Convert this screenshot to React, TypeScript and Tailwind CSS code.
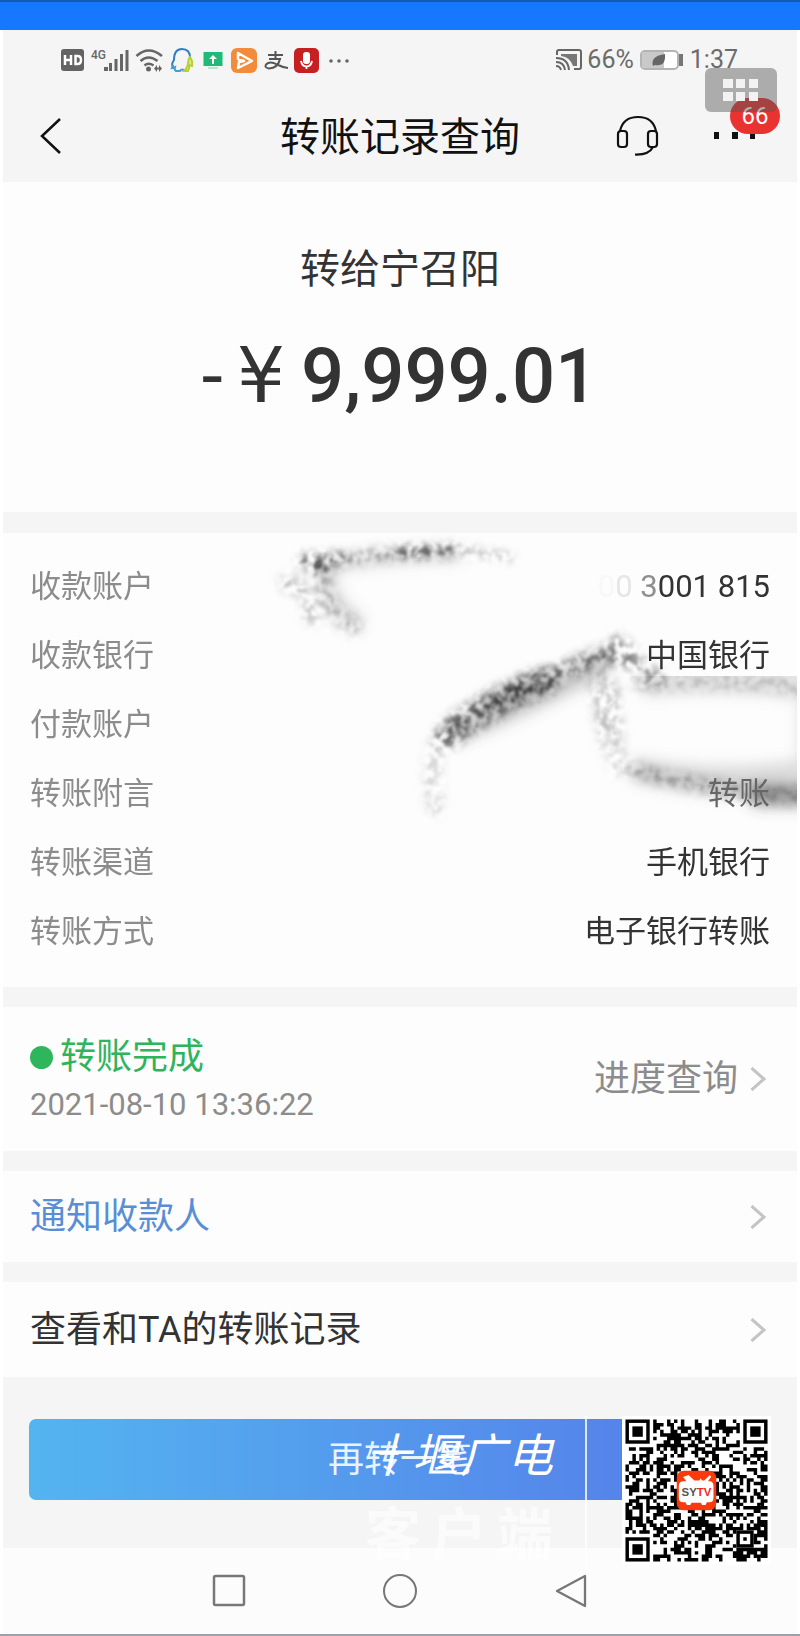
import type { ReactNode } from "react";

type Detail = { label: string; value: ReactNode };

const details: Detail[] = [
  {
    label: "收款账户",
    value: (
      <>
        <span className="text-[#f8f8f8]">0</span>
        <span className="text-[#e6e6e6]">0 </span>
        <span className="text-[#8f8f8f]">3</span>001 815
      </>
    ),
  },
  { label: "收款银行", value: "中国银行" },
  { label: "付款账户", value: "" },
  { label: "转账附言", value: <span className="text-[#666]">转账</span> },
  { label: "转账渠道", value: "手机银行" },
  { label: "转账方式", value: "电子银行转账" },
];

const QR_SIZE = 41;

function inFinder(x: number, y: number) {
  const far = QR_SIZE - 8;
  return (x < 8 && y < 8) || (x >= far && y < 8) || (x < 8 && y >= far);
}

function qrPath() {
  let d = "";
  let seed = 9157;
  for (let y = 0; y < QR_SIZE; y++) {
    for (let x = 0; x < QR_SIZE; x++) {
      seed = (seed * 1103515245 + 12345) % 2147483648;
      if (inFinder(x, y)) continue;
      if (x > 31 && x < 37 && y > 31 && y < 37) continue;
      if ((seed >> 12) % 100 < 52) d += `M${x} ${y}h1v1h-1z`;
    }
  }
  return d;
}

function Finder({ x, y }: { x: number; y: number }) {
  return (
    <>
      <rect x={x + 0.5} y={y + 0.5} width="6" height="6" fill="none" stroke="#000" />
      <rect x={x + 2} y={y + 2} width="3" height="3" />
    </>
  );
}

function QrCode() {
  return (
    <svg viewBox="-1 -1 43 43" className="block size-[149px] bg-white" role="img" aria-label="SYTV">
      <path d={qrPath()} />
      <Finder x={0} y={0} />
      <Finder x={34} y={0} />
      <Finder x={0} y={34} />
      <rect x="32.5" y="32.5" width="4" height="4" fill="none" stroke="#000" />
      <rect x="34" y="34" width="1" height="1" />
      <rect x="14.8" y="14.8" width="11.4" height="11.4" rx="2" fill="#f93a0c" />
      <path
        d="M18.2 16l1.7 1.6h1.4l.4-.6.4.6h.6L24.4 16l.3.6-.9 1.2h.4q1.2 0 1.2 1.4v3.3q0 1.4-1.2 1.4h-.7l-.4.8h-1l-.4-.7h-2.6l-.4.7h-1l-.4-.8h-.6q-1.3 0-1.3-1.4v-3.3q0-1.4 1.3-1.4h.9l-1-1.2z"
        fill="#fff"
      />
      <text x="20.5" y="22" textAnchor="middle" fontSize="3.3" fontWeight="700" className="font-['Liberation_Sans',sans-serif]">
        <tspan fill="#555">SY</tspan>
        <tspan fill="#f0281e">TV</tspan>
      </text>
    </svg>
  );
}

function StatusBar() {
  return (
    <div className="flex h-[60px] items-center justify-between pr-[59px] pl-[58px] text-[25px] text-[#6b6b6b]">
      <svg viewBox="61 45 290 28" className="h-7 w-[290px]" aria-hidden="true">
        <rect x="61" y="48" width="23" height="22" rx="3" fill="#636363" />
        <g stroke="#fff" strokeWidth="2.5" fill="none">
          <path d="M65 54v10M71 54v10M65 59h6M75.5 55v8h2q3.5 0 3.5-4t-3.5-4z" />
        </g>
        <text x="91" y="58" fontSize="12" fontWeight="500" fill="#666" className="font-[Roboto,sans-serif]">4G</text>
        <g fill="#666">
          <path d="M104 66h4v4h-4zM109 62h3v8h-3zM114.5 58h3v12h-3zM120 53h3v17h-3zM125.5 49h3v21h-3z" />
          <circle cx="148.5" cy="68" r="2.5" />
          <path d="M157 64l-3 3.5 3 3.5v-2.5h2V71l3-3.5-3-3.5v2.5h-2z" />
          <circle cx="331" cy="60" r="1.8" />
          <circle cx="339" cy="60" r="1.8" />
          <circle cx="347" cy="60" r="1.8" />
        </g>
        <g fill="none" stroke="#666" strokeWidth="2.5">
          <path d="M136.5 55q12-11 25.5 0M140.5 60q8-7 17 0M144.5 64.5q4-3.5 9 0" />
        </g>
        <g fill="none" strokeWidth="2">
          <path d="M173 66q-2-3 1-7 0-11 8-11 8 0 8 9" stroke="#2f7fc4" />
          <path d="M173 64l-1 3 3-1q-1 3 1 4h4q2-3 5 0" stroke="#4c9bd4" />
          <path d="M190 56q3 4 2 9l-3-1q1 3-1 6h-4q4-4 4-8t2-6z" stroke="#b8cf36" fill="#d7e67c" />
        </g>
        <path d="M203.5 51h19v14h-19z" fill="#1fb978" />
        <path d="M213 54l-4 4h3v5h2v-5h3z" fill="#fff" />
        <path d="M208 67h10" stroke="#a8dec8" strokeWidth="1.5" />
        <rect x="231" y="47" width="26" height="25" rx="6" fill="#f28c3c" />
        <path d="M238 52l14 8-14 7 1-6 5-1-6-2z" fill="none" stroke="#fff" strokeWidth="2.5" strokeLinejoin="round" />
        <g fill="none" stroke="#555" strokeWidth="2">
          <path d="M268 54h15M275.5 50v8M269 58h11q-2 9-11 9.5-5-1-3-4 4-4 11 0 6 3 11 3.5" />
        </g>
        <rect x="294" y="47" width="25" height="25" rx="5" fill="#c62023" />
        <rect x="303" y="51" width="7" height="12" rx="3" fill="#fff" />
        <path d="M301 60q1 5.5 5.5 5.5t5.5-5.5M306.5 65v3" fill="none" stroke="#fff" strokeWidth="1.8" />
      </svg>
      <div className="flex items-center">
        <svg viewBox="0 0 28 24" className="mr-1 h-6 w-7" aria-hidden="true" fill="none" stroke="#666" strokeWidth="2">
          <path d="M2 7V4q0-2 2-2h20q2 0 2 2v15q0 2-2 2h-5" />
          <path d="M6 6h16v12h-4Q15 9 6 8z" fill="#777" stroke="none" />
          <path d="M1 10q12 0 13 12M1 14q8 0 9 8M1 18q4 0 5 4" />
        </svg>
        <span>66%</span>
        <svg viewBox="0 0 44 22" className="mx-[6px] h-[22px] w-11" aria-hidden="true">
          <rect x="1" y="2" width="37" height="18" rx="4" fill="#fff" stroke="#b4b4b4" strokeWidth="2" />
          <path d="M2 3h22v16H2z" fill="#c9c9c9" />
          <path d="M39 5h4v12h-4z" fill="#777" />
          <path d="M13 17Q10 7 25 5q1 13-10 11z" fill="#666" />
        </svg>
        <span>1:37</span>
      </div>
    </div>
  );
}

function FloatingTools() {
  return (
    <div className="absolute top-[68px] right-5 h-[66px] w-[75px]">
      <div className="absolute top-[30px] right-0 flex h-9 w-[50px] items-center justify-center rounded-full bg-[#e93330] text-2xl text-white">
        66
      </div>
      <button
        type="button"
        aria-label="工具"
        className="absolute top-0 left-0 flex h-11 w-[72px] items-center justify-center rounded-[6px] bg-[#555]/45"
      >
        <svg viewBox="0 0 36 22" className="h-[22px] w-9" fill="#f2f2f2" aria-hidden="true">
          <path d="M0 0h10v9H0zM13 0h9v9h-9zM26 0h9v9h-9zM0 13h10v9H0zM13 13h9v9h-9zM26 13h9v9h-9z" />
        </svg>
      </button>
    </div>
  );
}

function Smudges() {
  return (
    <svg
      viewBox="250 532 547 318"
      className="pointer-events-none absolute top-0 right-0 h-[318px] w-[547px]"
      fill="none"
      strokeLinecap="round"
      strokeLinejoin="round"
      aria-hidden="true"
    >
      <defs>
        <filter id="speckle" filterUnits="userSpaceOnUse" x="200" y="500" width="640" height="400">
          <feGaussianBlur in="SourceGraphic" stdDeviation="5" result="soft" />
          <feTurbulence type="fractalNoise" baseFrequency="0.13" numOctaves="2" seed="4" />
          <feColorMatrix values="0 0 0 0 0  0 0 0 0 0  0 0 0 0 0  3.5 0 0 0 -1.3" result="noise" />
          <feComposite in="soft" in2="noise" operator="in" result="grains" />
          <feGaussianBlur in="grains" stdDeviation="1.2" />
        </filter>
        <filter id="haze" filterUnits="userSpaceOnUse" x="200" y="500" width="640" height="400">
          <feGaussianBlur stdDeviation="7" />
        </filter>
        <clipPath id="lowerBand">
          <rect x="560" y="675" width="240" height="170" />
        </clipPath>
      </defs>

      <g filter="url(#haze)">
        <path d="M326 572q2 30 28 48" stroke="#777" strokeWidth="20" opacity=".22" />
        <path d="M325 566q60-12 130-12" stroke="#777" strokeWidth="14" opacity=".25" />
        <path d="M460 728Q530 700 600 662" stroke="#555" strokeWidth="26" opacity=".3" />
        <path d="M490 702l50-22" stroke="#444" strokeWidth="16" opacity=".45" />
      </g>
      <g filter="url(#speckle)">
        <path d="M304 560l36-2M314 568l10 0" stroke="#222" strokeWidth="12" opacity=".75" />
        <path d="M340 558q60-8 110-8" stroke="#444" strokeWidth="9" opacity=".6" />
        <path d="M400 552l55-3" stroke="#111" strokeWidth="8" opacity=".9" />
        <path d="M455 550q30 0 55 7" stroke="#666" strokeWidth="6" opacity=".6" />
        <path d="M286 582q26 4 26 34M324 580q0 30 30 45" stroke="#555" strokeWidth="16" opacity=".35" />
        <path d="M448 734Q490 700 545 680" stroke="#222" strokeWidth="26" opacity=".7" />
        <path d="M500 700Q560 670 605 654l18 2" stroke="#333" strokeWidth="16" opacity=".65" />
        <path d="M618 642q14 20 38 36" stroke="#444" strokeWidth="18" opacity=".5" />
        <path d="M440 740q-12 20-4 66" stroke="#666" strokeWidth="18" opacity=".25" />
        <path d="M600 680l12 50" stroke="#666" strokeWidth="26" opacity=".25" />
      </g>
      <g clipPath="url(#lowerBand)">
        <g filter="url(#haze)">
          <path d="M650 684q80-8 160 4v80q-90 14-170 0" stroke="#888" strokeWidth="22" opacity=".28" />
          <path d="M640 774q80 18 170 18" stroke="#666" strokeWidth="14" opacity=".3" />
          <path d="M760 794h50" stroke="#444" strokeWidth="24" opacity=".45" />
        </g>
        <g filter="url(#speckle)">
          <path d="M640 682q80-6 170 4" stroke="#777" strokeWidth="16" opacity=".3" />
          <path d="M612 690q-14 30 8 74" stroke="#777" strokeWidth="22" opacity=".25" />
          <path d="M634 768q80 24 180 28" stroke="#444" strokeWidth="12" opacity=".4" />
        </g>
      </g>
    </svg>
  );
}

function Chevron() {
  return (
    <svg viewBox="0 0 16 24" className="h-6 w-4 shrink-0" fill="none" stroke="#c4c4c4" strokeWidth="3" aria-hidden="true">
      <path d="M1.5 1L14 12 1.5 23" />
    </svg>
  );
}

export default function App() {
  return (
    <div className="relative bg-white font-[Roboto,'Noto_Sans_CJK_SC',sans-serif]">
      <div className="h-[30px] border-t-2 border-[#1559b5] bg-[#1677ff]" />

      <div className="mx-[3px] bg-[#f5f5f5]">
        <header>
          <StatusBar />
          <div className="grid h-[92px] grid-cols-[1fr_auto_1fr] items-center">
            <button type="button" aria-label="返回" className="ml-[37px] w-6">
              <svg viewBox="0 0 24 38" className="block h-[38px] w-6" fill="none" stroke="#111" strokeWidth="2.5">
                <path d="M20 2L2 19l18 17" />
              </svg>
            </button>
            <h1 className="pt-1 text-[40px] leading-[48px] text-[#111]">转账记录查询</h1>
            <div className="flex items-center justify-end gap-[54px] pr-[41px]">
              <button type="button" aria-label="客服">
                <svg viewBox="0 0 44 42" className="block h-[42px] w-11" fill="none" stroke="#111" strokeWidth="2.2">
                  <path d="M4 16Q7 2 22 2t18 14" />
                  <rect x="2" y="16" width="9" height="16" rx="3" />
                  <rect x="32" y="16" width="9" height="16" rx="3" />
                  <path d="M37 32q-4 8-18 7.500" />
                </svg>
              </button>
              <button type="button" aria-label="更多">
                <svg viewBox="0 0 42 8" className="block h-2 w-[42px]" fill="#111">
                  <path d="M0 0h5v7H0zM18 0h6v7h-6zM36 0h5v7h-5z" />
                </svg>
              </button>
            </div>
          </div>
        </header>

        <main>
          <section className="flex h-[330px] flex-col items-center bg-[#fdfdfd] pt-16 text-[#333]">
            <h2 className="text-[40px] leading-[48px]">转给宁召阳</h2>
            <p className="mt-9 flex items-center text-[76px] leading-[92px] font-medium">
              <span className="mr-[14px] text-[76px] font-normal">-</span>
              <span className="mr-4 font-['DejaVu_Sans',sans-serif] font-normal">¥</span>
              <span>9,999.01</span>
            </p>
          </section>

          <section className="relative mt-[21px] bg-[#fdfdfd] py-5">
            <Smudges />
            <dl className="relative px-[27px] text-[31px]">
              {details.map((row) => (
                <div key={row.label} className="flex h-[69px] items-center justify-between">
                  <dt className="text-[#8c8c8c]">{row.label}</dt>
                  <dd className="text-[#333]">{row.value}</dd>
                </div>
              ))}
            </dl>
          </section>

          <section className="mt-5 flex h-36 items-center justify-between bg-[#fdfdfd] pr-[31px] pl-[27px]">
            <div className="pt-1">
              <p className="flex items-center gap-[7px] text-4xl leading-[48px] text-[#2fb45c]">
                <span className="size-[23px] rounded-full bg-[#2fb65c]" />
                转账完成
              </p>
              <p className="text-[31px] leading-[48px] text-[#8c8c8c]">2021-08-10 13:36:22</p>
            </div>
            <a href="#progress" className="flex items-center gap-3 text-4xl text-[#8c8c8c]">
              进度查询
              <Chevron />
            </a>
          </section>

          <a
            href="#notify"
            className="mt-5 flex h-[91px] items-center justify-between bg-[#fdfdfd] pr-[31px] pl-[27px] text-4xl text-[#588ed6]"
          >
            通知收款人
            <Chevron />
          </a>

          <a
            href="#history"
            className="mt-5 flex h-[95px] items-center justify-between bg-[#fdfdfd] pr-[31px] pl-[27px] text-4xl text-[#333]"
          >
            查看和TA的转账记录
            <Chevron />
          </a>
        </main>

        <div className="relative px-[26px] pt-[42px] pb-12">
          <button
            type="button"
            className="block h-[81px] w-full rounded-[7px] bg-linear-to-r from-[#53b4f0] to-[#5577e8] text-4xl text-[#e8f3ff]"
          >
            再转一笔
          </button>

          {/* Broadcaster watermark */}
          <div className="pointer-events-none absolute top-[39px] right-[26px] z-10 flex">
            <div className="mr-8 w-[188px] text-white">
              <p className="flex justify-between pt-2 font-['Noto_Sans_CJK_SC',sans-serif] text-[46px] leading-[56px] italic">
                <span>十</span>
                <span>堰</span>
                <span>广</span>
                <span>电</span>
              </p>
              <p className="flex justify-between pt-[18px] font-['Noto_Sans_CJK_SC',sans-serif] text-[56px] leading-[64px] font-bold text-white/60">
                <span>客</span>
                <span>户</span>
                <span>端</span>
              </p>
            </div>
            <div className="mr-[35px] h-[154px] w-[2px] bg-white/80" />
            <QrCode />
          </div>
        </div>
      </div>

      <nav className="mx-[3px] flex h-[86px] items-center justify-center gap-[137px] bg-[#fcfcfc]">
        <button type="button" aria-label="最近任务">
          <svg viewBox="0 0 34 34" className="block size-[34px]" fill="none" stroke="#777" strokeWidth="2.5">
            <rect x="2" y="2" width="30" height="29" rx="1.5" />
          </svg>
        </button>
        <button type="button" aria-label="主屏幕">
          <svg viewBox="0 0 34 34" className="block size-[34px]" fill="none" stroke="#777" strokeWidth="2">
            <circle cx="17" cy="17" r="16" />
          </svg>
        </button>
        <button type="button" aria-label="返回上一级">
          <svg viewBox="0 0 34 34" className="block size-[34px]" fill="none" stroke="#777" strokeWidth="2.3" strokeLinejoin="round">
            <path d="M31 2v30L3 17z" />
          </svg>
        </button>
      </nav>
      <div className="h-[2px] bg-[#9da1ad]" />

      <FloatingTools />
    </div>
  );
}
